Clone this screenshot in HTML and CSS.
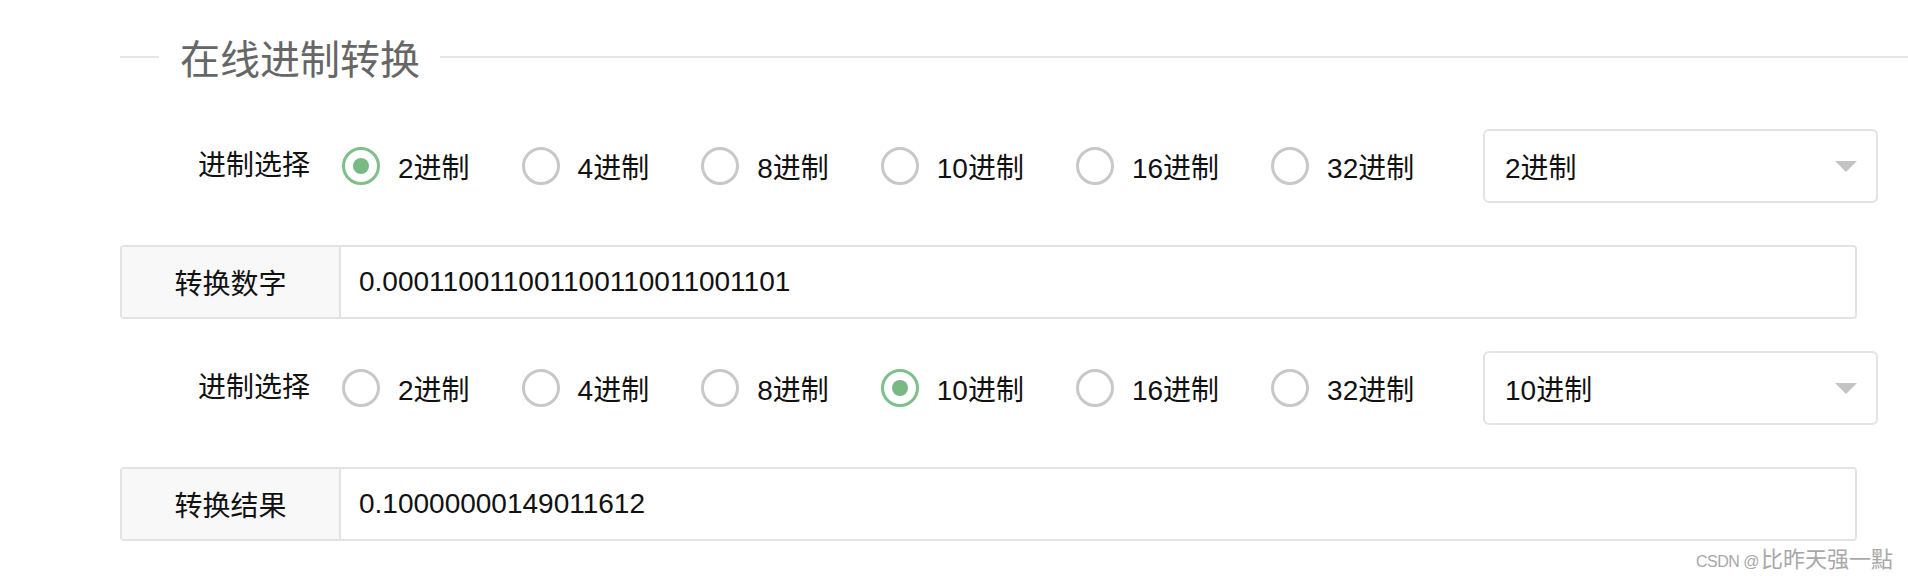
FILE: index.html
```html
<!DOCTYPE html>
<html lang="zh-CN">
<head>
<meta charset="utf-8">
<title>在线进制转换</title>
<link rel="stylesheet" href="styles.css">
</head>
<body>
<div class="page">
  <div class="title-bar">
    <span class="title-line short"></span>
    <h1 class="title">在线进制转换</h1>
    <span class="title-line long"></span>
  </div>

  <div class="form">
    <div class="radio-row">
      <span class="row-label">进制选择</span>
      <label class="radio checked"><span class="dot"></span><span class="radio-text">2进制</span></label>
      <label class="radio"><span class="dot"></span><span class="radio-text">4进制</span></label>
      <label class="radio"><span class="dot"></span><span class="radio-text">8进制</span></label>
      <label class="radio"><span class="dot"></span><span class="radio-text">10进制</span></label>
      <label class="radio"><span class="dot"></span><span class="radio-text">16进制</span></label>
      <label class="radio"><span class="dot"></span><span class="radio-text">32进制</span></label>
      <div class="select"><span class="select-text">2进制</span><span class="caret"></span></div>
    </div>

    <div class="input-row first">
      <div class="input-label">转换数字</div>
      <div class="input-value">0.000110011001100110011001101</div>
    </div>

    <div class="radio-row">
      <span class="row-label">进制选择</span>
      <label class="radio"><span class="dot"></span><span class="radio-text">2进制</span></label>
      <label class="radio"><span class="dot"></span><span class="radio-text">4进制</span></label>
      <label class="radio"><span class="dot"></span><span class="radio-text">8进制</span></label>
      <label class="radio checked"><span class="dot"></span><span class="radio-text">10进制</span></label>
      <label class="radio"><span class="dot"></span><span class="radio-text">16进制</span></label>
      <label class="radio"><span class="dot"></span><span class="radio-text">32进制</span></label>
      <div class="select"><span class="select-text">10进制</span><span class="caret"></span></div>
    </div>

    <div class="input-row">
      <div class="input-label">转换结果</div>
      <div class="input-value">0.10000000149011612</div>
    </div>
  </div>

  <div class="watermark"><span class="wm-latin">CSDN @</span><span class="wm-cjk">比昨天强一點</span></div>
</div>
</body>
</html>
```

FILE: styles.css
```css
html, body {
  margin: 0;
  padding: 0;
  background: #ffffff;
}

body {
  font-family: "Liberation Sans", "Noto Sans CJK SC", sans-serif;
  color: #111111;
  width: 1908px;
  height: 576px;
  overflow: hidden;
}

.page {
  position: relative;
  height: 576px;
}

.title-bar {
  display: flex;
  align-items: center;
  padding-top: 27px;
  padding-left: 120px;
  height: 60px;
}

.title-line {
  height: 2px;
  background: #e6e6e6;
}

.title-line.short {
  width: 39px;
}

.title-line.long {
  flex: 1;
}

.title {
  margin: 0 20px 0 21px;
  font-size: 40px;
  font-weight: normal;
  line-height: 60px;
  color: #666666;
  font-family: "Noto Sans CJK SC", sans-serif;
}

.form {
  margin-left: 120px;
  width: 1758px;
  padding-top: 42px;
}

.radio-row {
  display: flex;
  align-items: center;
  height: 74px;
  margin-bottom: 42px;
  font-size: 28px;
}

.row-label {
  margin-left: 78px;
  margin-right: 32px;
  line-height: 74px;
}

.radio {
  display: flex;
  align-items: center;
  margin-right: 52px;
}

.dot {
  box-sizing: border-box;
  width: 38px;
  height: 38px;
  border: 3px solid #c8c8c8;
  border-radius: 50%;
  margin-right: 18px;
  display: flex;
  align-items: center;
  justify-content: center;
}

.radio.checked .dot {
  border-color: #7fbf89;
}

.radio.checked .dot::after {
  content: "";
  width: 16px;
  height: 16px;
  border-radius: 50%;
  background: #78b984;
}

.select {
  margin-left: auto;
  box-sizing: border-box;
  width: 395px;
  height: 74px;
  border: 2px solid #e3e3e3;
  border-radius: 6px;
  display: flex;
  align-items: center;
  justify-content: space-between;
  padding: 0 19px 0 20px;
}

.caret {
  width: 0;
  height: 0;
  border-left: 11px solid transparent;
  border-right: 11px solid transparent;
  border-top: 11px solid #c4c4c4;
}

.input-row {
  box-sizing: border-box;
  width: 1737px;
  height: 74px;
  border: 2px solid #e3e3e3;
  border-radius: 4px;
  display: flex;
  font-size: 28px;
}

.input-row.first {
  margin-bottom: 32px;
}

.input-label {
  box-sizing: border-box;
  width: 219px;
  background: #f8f8f8;
  border-right: 2px solid #e3e3e3;
  display: flex;
  align-items: center;
  justify-content: center;
}

.input-value {
  flex: 1;
  display: flex;
  align-items: center;
  padding-left: 18px;
}

.watermark {
  position: absolute;
  right: 15px;
  top: 543px;
  color: #a8a8a8;
  display: flex;
  align-items: baseline;
  line-height: 28px;
}

.wm-latin {
  font-size: 16px;
  letter-spacing: -0.5px;
  margin-right: 2px;
}

.wm-cjk {
  font-size: 22px;
  font-family: "Noto Sans CJK SC", sans-serif;
}
```
